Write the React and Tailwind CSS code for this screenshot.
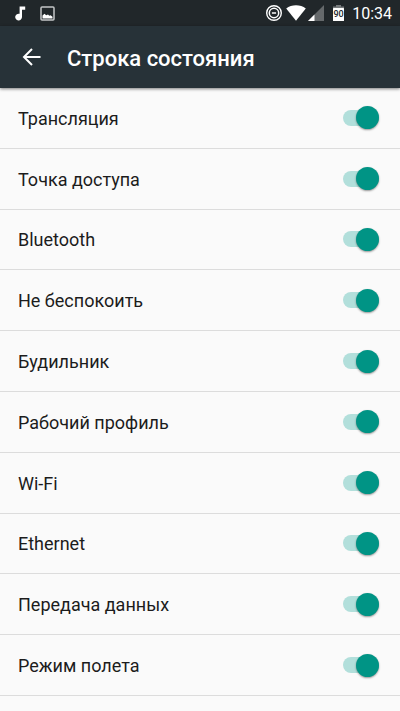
import React, { useState } from 'react';

const items = [
  'Трансляция',
  'Точка доступа',
  'Bluetooth',
  'Не беспокоить',
  'Будильник',
  'Рабочий профиль',
  'Wi-Fi',
  'Ethernet',
  'Передача данных',
  'Режим полета',
];

function StatusBar() {
  return (
    <div className="flex h-[26px] items-center justify-between bg-[#21272a] pl-[15px] pr-2 text-white">
      <div className="flex items-center gap-[14px]">
        <svg className="h-[15px] w-[11px]" viewBox="0 0 11 15" fill="currentColor">
          <path d="M4.6 0.5h5.6v3.2H7v7.3a3.4 3.4 0 1 1-2.4-3.2z" />
        </svg>
        <svg className="h-[15px] w-[15px]" viewBox="0 0 15 15">
          <rect x="1" y="1" width="13" height="13" rx="1" fill="none" stroke="#c3c6c7" strokeWidth="1.5" />
          <path d="M2.5 12.5V9.5l2-1.8 1.7 1.5L8 8.5l1.3 1.2 1.2-.5 2 1.5v1.8z" fill="currentColor" />
        </svg>
      </div>
      <div className="flex items-center">
        <svg className="h-4 w-4" viewBox="0 0 16 16" fill="none" stroke="currentColor">
          <circle cx="8" cy="8" r="7.3" strokeWidth="1.4" />
          <circle cx="8" cy="8" r="4.7" strokeWidth="1.5" />
          <path d="M5.9 8h4.2" strokeWidth="1.5" />
        </svg>
        <svg className="ml-1 h-4 w-5" viewBox="0 0 20 16" fill="currentColor">
          <path d="M10 15.8L0.2 3.4C3 1.3 6.3 0.2 10 0.2s7 1.1 9.8 3.2z" />
        </svg>
        <svg className="ml-[2px] h-4 w-4" viewBox="0 0 16 16">
          <path d="M0 16L16 0v16z" fill="#65696b" />
          <path d="M0 16L6.5 9.5V16z" fill="#ffffff" />
        </svg>
        <svg className="ml-[9px] h-4 w-[11px]" viewBox="0 0 11 16">
          <path d="M3 0h5v2H3z" fill="#777b7d" />
          <rect x="0" y="1.5" width="11" height="2" fill="#777b7d" />
          <rect x="0" y="3" width="11" height="13" rx="0.5" fill="#ffffff" />
          <text x="5.5" y="12" textAnchor="middle" fontSize="9" fontWeight="500" fontFamily="Roboto, sans-serif" fill="#21272a">
            90
          </text>
        </svg>
        <span className="ml-2 pt-[2px] text-base leading-5">10:34</span>
      </div>
    </div>
  );
}

function SettingRow({ label }) {
  const [enabled, setEnabled] = useState(true);

  return (
    <li className="flex flex-1 border-b border-[#dcdcdc]">
      <label className="flex flex-1 items-center justify-between pl-[18px] pr-[21px] text-lg leading-6 text-[#1c1c1c]">
        <span className="pt-[2px]">{label}</span>
        <input
          type="checkbox"
          role="switch"
          checked={enabled}
          onChange={(e) => setEnabled(e.target.checked)}
          className="flex h-4 w-9 appearance-none items-center rounded-full bg-gray-300 before:size-[23px] before:shrink-0 before:rounded-full before:bg-gray-50 before:shadow-[0_1px_2px_rgba(0,0,0,0.4)] before:content-[''] checked:justify-end checked:bg-[#b2dfdb] checked:before:bg-[#009485]"
        />
      </label>
    </li>
  );
}

function App() {
  return (
    <div className="flex min-h-screen flex-col bg-[#fafafa] font-['Roboto',sans-serif]">
      <StatusBar />
      <header className="z-10 flex h-[62px] items-center bg-[#273238] pl-[22px] text-white shadow-[0_1px_3px_rgba(0,0,0,0.5)]">
        <button type="button" aria-label="Назад" className="mr-[26px]">
          <svg className="h-[18px] w-[19px]" viewBox="0 0 19 18" fill="none" stroke="currentColor" strokeWidth="2">
            <path d="M18.5 9H2M10 1L2 9l8 8" />
          </svg>
        </button>
        <h1 className="pt-1 text-[22px] font-medium leading-7">Строка состояния</h1>
      </header>
      <ul className="flex flex-1 flex-col pb-[15px]">
        {items.map((item) => (
          <SettingRow key={item} label={item} />
        ))}
      </ul>
    </div>
  );
}

export default App;
